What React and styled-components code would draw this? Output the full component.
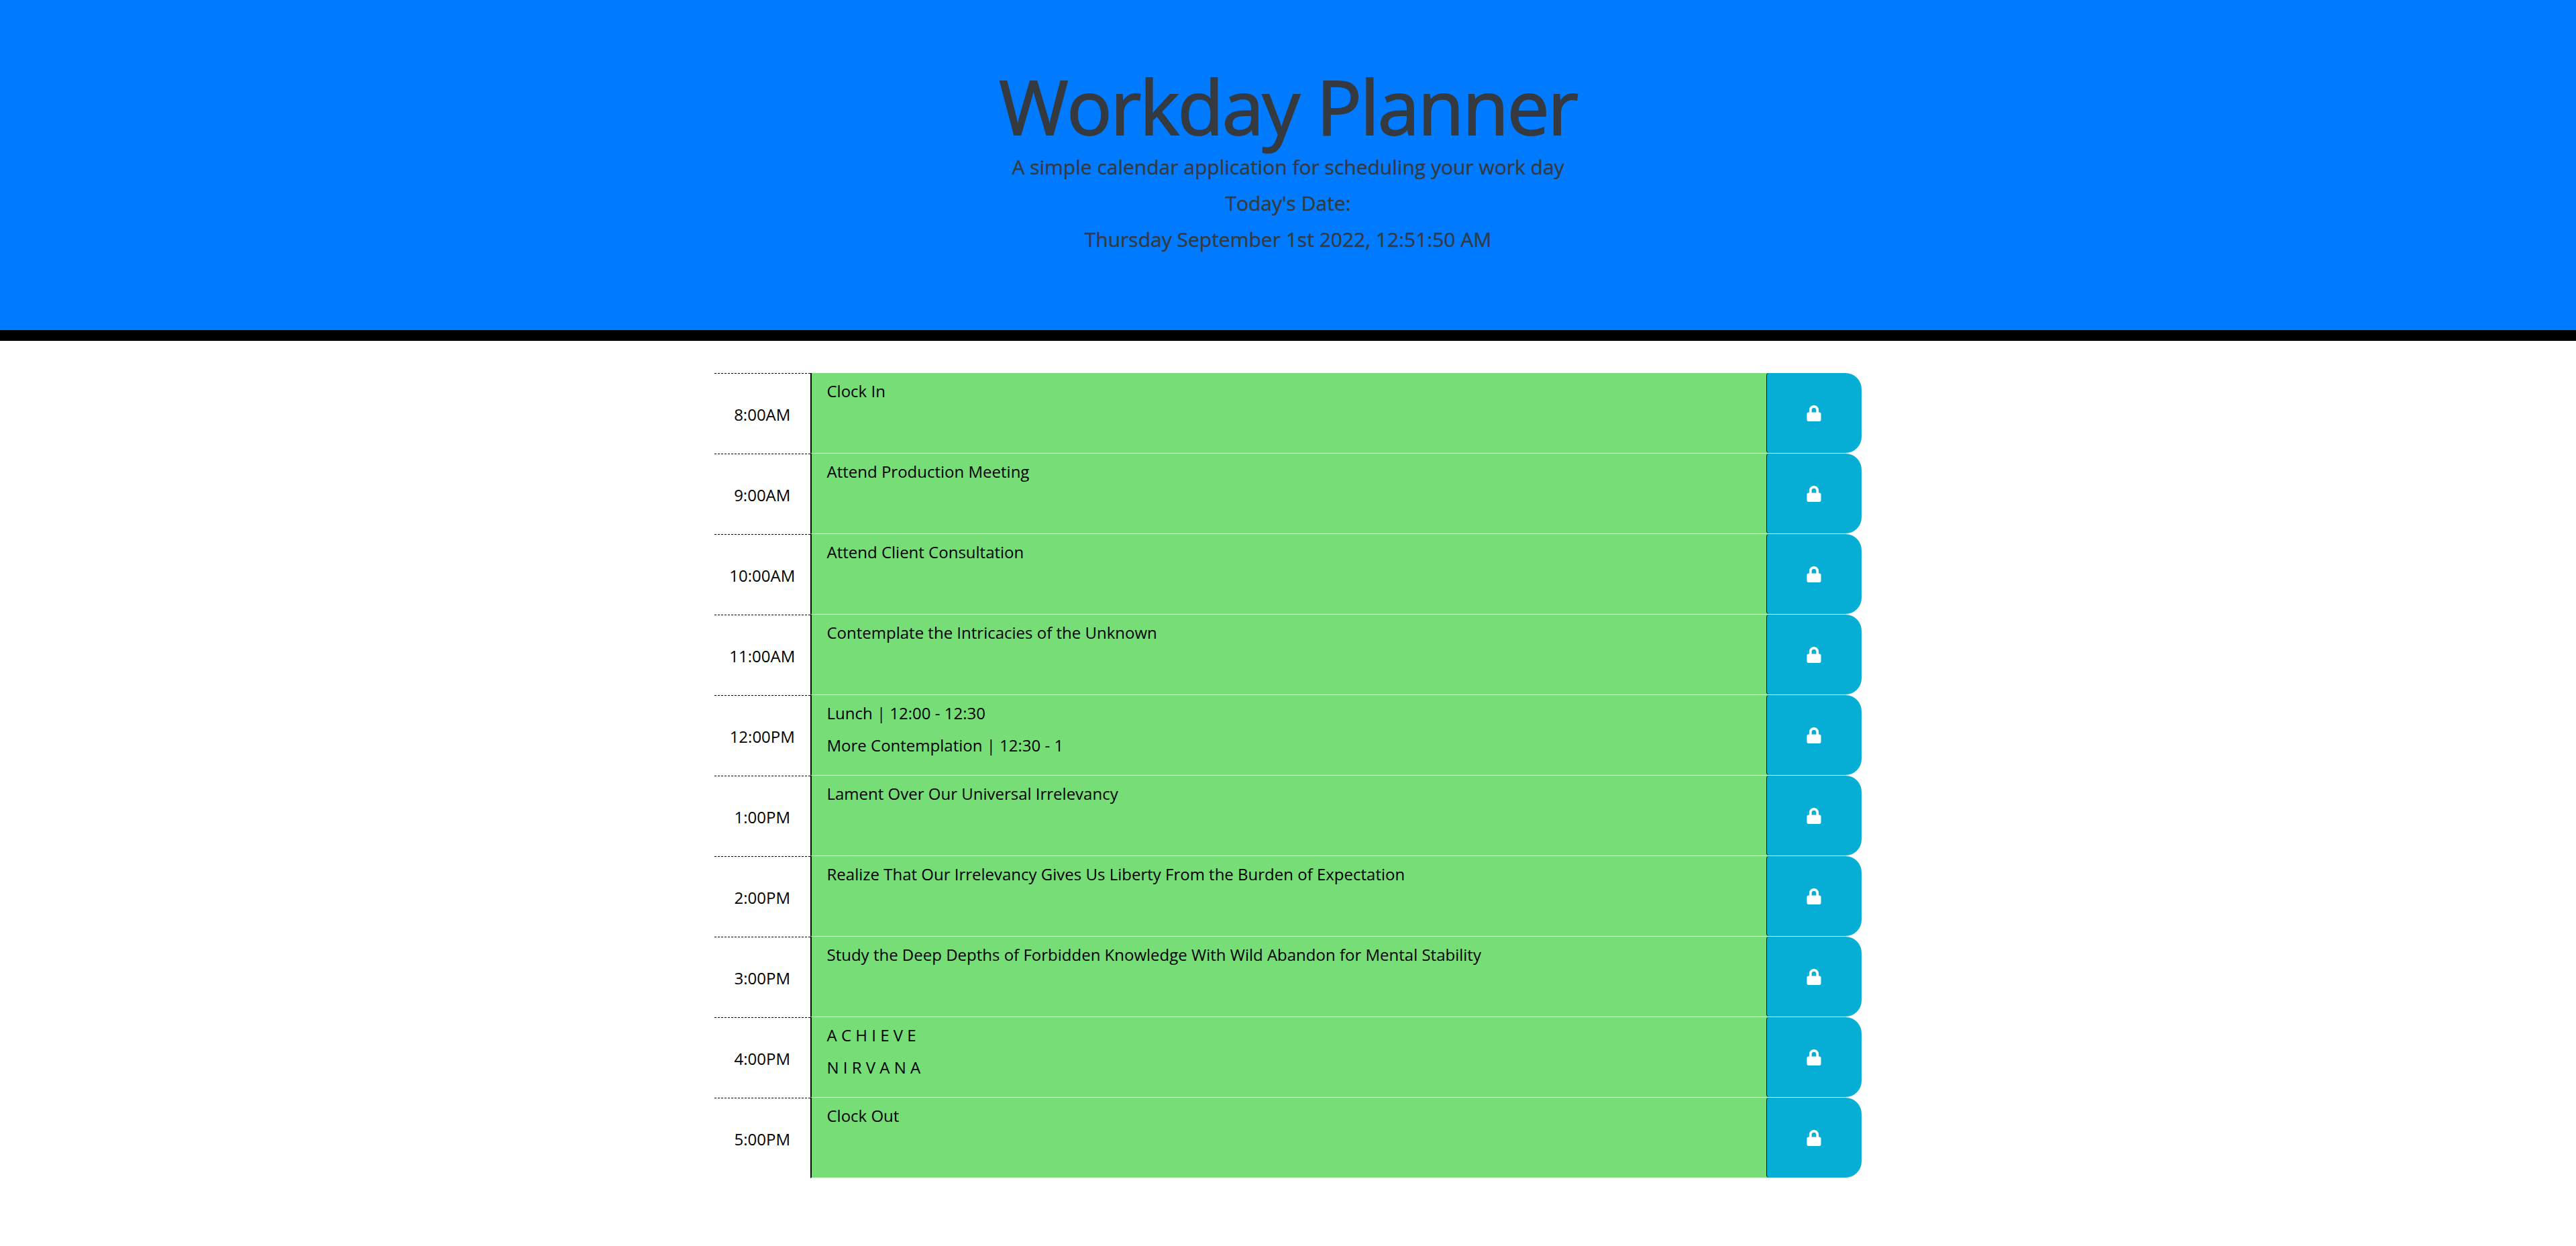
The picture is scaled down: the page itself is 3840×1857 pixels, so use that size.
import styled, { createGlobalStyle } from 'styled-components';
import { FaLock } from 'react-icons/fa';

const GlobalStyle = createGlobalStyle`
  * {
    box-sizing: border-box;
  }
  html, body {
    margin: 0;
    background: #fff;
  }
  body {
    font-family: "Open Sans", sans-serif;
    color: #212529;
  }
`;

const Header = styled.header`
  height: 508px;
  padding-top: 93px;
  background: #007bff;
  border-bottom: 16px solid #000;
  text-align: center;
  color: #343a40;
`;

// no medium face is installed, the stroke gives the heading its weight
const Title = styled.h1`
  margin: 0;
  font-size: 112px;
  font-weight: 400;
  line-height: 129px;
  letter-spacing: -0.02em;
  -webkit-text-stroke: 2px #343a40;
`;

const Lead = styled.p`
  margin: 0;
  font-size: 30px;
  line-height: 54px;
  -webkit-text-stroke: 0.4px #343a40;
`;

const Planner = styled.main`
  width: 1710px;
  margin: 48px auto 0;
`;

const Row = styled.div`
  display: grid;
  grid-template-columns: 142.5px 1fr 142.5px;
  height: 120px;
`;

const Hour = styled.div`
  display: flex;
  align-items: center;
  justify-content: center;
  padding-top: 2px;
  border-top: 1px dashed #000;
  font-size: 24px;
  color: #000;
`;

const Task = styled.textarea`
  display: block;
  width: 100%;
  height: 100%;
  margin: 0;
  padding: 3px 23px 0;
  border: 0;
  border-left: 2px solid #000;
  border-bottom: 1px solid #fff;
  border-radius: 0;
  outline: none;
  resize: none;
  overflow: hidden;
  background: #77dd77;
  color: #000;
  font-family: inherit;
  font-size: 24px;
  line-height: 48px;
`;

// green shows behind the button's small left corners, not under the white divider
const SaveCell = styled.div`
  display: flex;
  padding-bottom: 1px;
  background: linear-gradient(90deg, #77dd77 8px, transparent 8px) no-repeat;
  background-size: 100% calc(100% - 1px);
`;

const SaveButton = styled.button`
  display: flex;
  flex: 1;
  align-items: center;
  justify-content: center;
  margin: 0;
  padding: 0;
  border: 0;
  border-left: 1px solid #000;
  border-radius: 4px 24px 24px 4px;
  background: #06aed5;
  color: #fff;
  font-size: 24px;
`;

const hours = [
  { time: '8:00AM', task: 'Clock In' },
  { time: '9:00AM', task: 'Attend Production Meeting' },
  { time: '10:00AM', task: 'Attend Client Consultation' },
  { time: '11:00AM', task: 'Contemplate the Intricacies of the Unknown' },
  { time: '12:00PM', task: 'Lunch | 12:00 - 12:30\nMore Contemplation | 12:30 - 1' },
  { time: '1:00PM', task: 'Lament Over Our Universal Irrelevancy' },
  { time: '2:00PM', task: 'Realize That Our Irrelevancy Gives Us Liberty From the Burden of Expectation' },
  { time: '3:00PM', task: 'Study the Deep Depths of Forbidden Knowledge With Wild Abandon for Mental Stability' },
  { time: '4:00PM', task: 'A C H I E V E\nN I R V A N A' },
  { time: '5:00PM', task: 'Clock Out' },
];

export default function App() {
  return (
    <>
      <GlobalStyle />
      <Header>
        <Title>Workday Planner</Title>
        <Lead>A simple calendar application for scheduling your work day</Lead>
        <Lead>Today's Date:</Lead>
        <Lead>Thursday September 1st 2022, 12:51:50 AM</Lead>
      </Header>
      <Planner>
        {hours.map((hour) => (
          <Row key={hour.time}>
            <Hour>{hour.time}</Hour>
            <Task defaultValue={hour.task} spellCheck={false} />
            <SaveCell>
              <SaveButton type="button" aria-label="Save">
                <FaLock />
              </SaveButton>
            </SaveCell>
          </Row>
        ))}
      </Planner>
    </>
  );
}
